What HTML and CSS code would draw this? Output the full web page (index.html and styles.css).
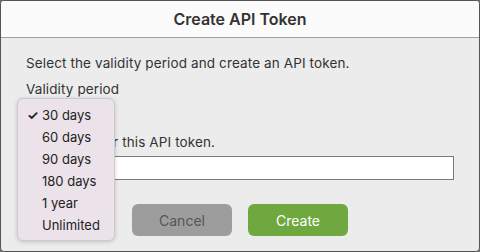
FILE: index.html
```html
<!DOCTYPE html>
<html>
<head>
<meta charset="utf-8">
<link rel="stylesheet" href="styles.css">
</head>
<body>
<div class="window">
  <div class="titlebar">Create API Token</div>
  <div class="content">
    <p class="line">Select the validity period and create an API token.</p>
    <p class="line">Validity period</p>
    <div class="select">30 days</div>
    <p class="line">Enter a tag for this API token.</p>
    <div class="input"></div>
    <div class="buttons">
      <div class="btn cancel">Cancel</div>
      <div class="btn create">Create</div>
    </div>
  </div>
  <ul class="menu">
    <li class="item checked"><span class="check">✓</span>30 days</li>
    <li class="item">60 days</li>
    <li class="item">90 days</li>
    <li class="item">180 days</li>
    <li class="item">1 year</li>
    <li class="item">Unlimited</li>
  </ul>
</div>
</body>
</html>
```
FILE: styles.css
```css
html, body {
  margin: 0;
  padding: 0;
  background: #6e6e6e;
}
body {
  width: 480px;
  height: 252px;
  font-family: Inter, "Noto Sans", "Liberation Sans", sans-serif;
  color: #333;
}
.window {
  position: relative;
  width: 480px;
  height: 252px;
  box-sizing: border-box;
  border: 1px solid #555;
  border-radius: 4px;
  background: #ececec;
  overflow: hidden;
}
.titlebar {
  height: 36px;
  background: #fbfbfb;
  border-bottom: 1px solid #a0a0a0;
  display: flex;
  align-items: center;
  justify-content: center;
  font-weight: 600;
  font-size: 16px;
  color: #333;
}
.content {
  padding: 14px 0 0 25px;
}
.line {
  margin: 0 0 4px;
  height: 22px;
  line-height: 22px;
  font-size: 13.5px;
  letter-spacing: 0.12px;
  white-space: nowrap;
}
.select {
  height: 22px;
  margin: 0 0 5px;
  width: 90px;
  font-size: 13px;
}
.input {
  width: 428px;
  height: 24px;
  box-sizing: border-box;
  background: #fff;
  border: 1px solid #7a7a7a;
  margin-top: -1px;
}
.buttons {
  display: flex;
  gap: 16px;
  margin: 24px 0 0 106px;
}
.btn {
  width: 100px;
  height: 32px;
  border-radius: 6px;
  display: flex;
  align-items: center;
  justify-content: center;
  font-size: 14px;
}
.cancel {
  background: #9d9d9d;
  color: #555;
}
.create {
  background: #6ea83f;
  color: #fff;
}
.menu {
  position: absolute;
  left: 16px;
  top: 97px;
  width: 98px;
  height: 143px;
  box-sizing: border-box;
  margin: 0;
  padding: 5px 0 0;
  list-style: none;
  background: #ebe3e9;
  border: 1px solid #cfc9cd;
  border-radius: 6px;
  box-shadow: 0 1px 4px rgba(0, 0, 0, 0.18);
}
.item {
  position: relative;
  height: 22px;
  line-height: 22px;
  padding-left: 24px;
  font-size: 13px;
  color: #222;
}
.check {
  position: absolute;
  left: 9px;
  top: 0;
  font-size: 13px;
  font-weight: 700;
}
```
